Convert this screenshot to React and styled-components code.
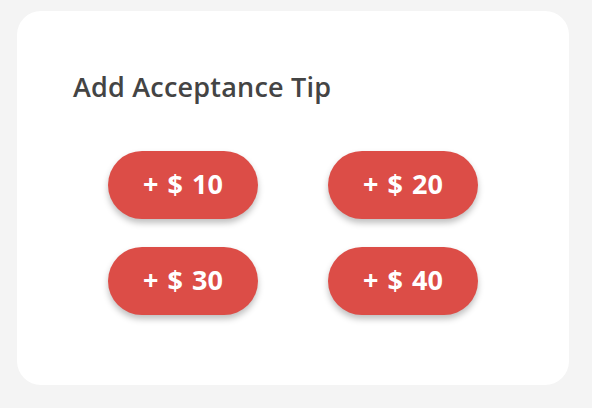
import React from "react";
import styled, { createGlobalStyle } from "styled-components";

const Global = createGlobalStyle`
  html, body { margin: 0; padding: 0; background: #f4f4f4; }
  body { font-family: "Open Sans", "Lato", sans-serif; }
`;

const Page = styled.div`
  padding: 11px 23px 23px 17px;
`;

const Card = styled.div`
  width: 552px;
  height: 374px;
  box-sizing: border-box;
  background: #ffffff;
  border-radius: 24px;
  padding: 58px 0 0 56px;
  display: flex;
  flex-direction: column;
`;

const Title = styled.h2`
  margin: 0;
  font-family: "Open Sans", sans-serif;
  font-weight: 600;
  font-size: 27px;
  letter-spacing: 0.2px;
  line-height: 36px;
  color: #444444;
`;

const Grid = styled.div`
  display: grid;
  grid-template-columns: repeat(2, 150px);
  column-gap: 70px;
  row-gap: 28px;
  margin: 46px 0 0 35px;
`;

const TipButton = styled.button`
  width: 150px;
  height: 68px;
  border: none;
  border-radius: 34px;
  background: #dc4d47;
  color: #ffffff;
  font-family: "Open Sans", sans-serif;
  font-weight: 700;
  font-size: 27px;
  word-spacing: 2px;
  line-height: 1;
  display: flex;
  align-items: center;
  justify-content: center;
  padding: 0 0 4px;
  box-shadow: 0 4px 6px rgba(0, 0, 0, 0.25);
  cursor: pointer;
`;

const amounts = [10, 20, 30, 40];

export default function App() {
  return (
    <>
      <Global />
      <Page>
        <Card>
          <Title>Add Acceptance Tip</Title>
          <Grid>
            {amounts.map((a) => (
              <TipButton key={a}>+ $ {a}</TipButton>
            ))}
          </Grid>
        </Card>
      </Page>
    </>
  );
}
